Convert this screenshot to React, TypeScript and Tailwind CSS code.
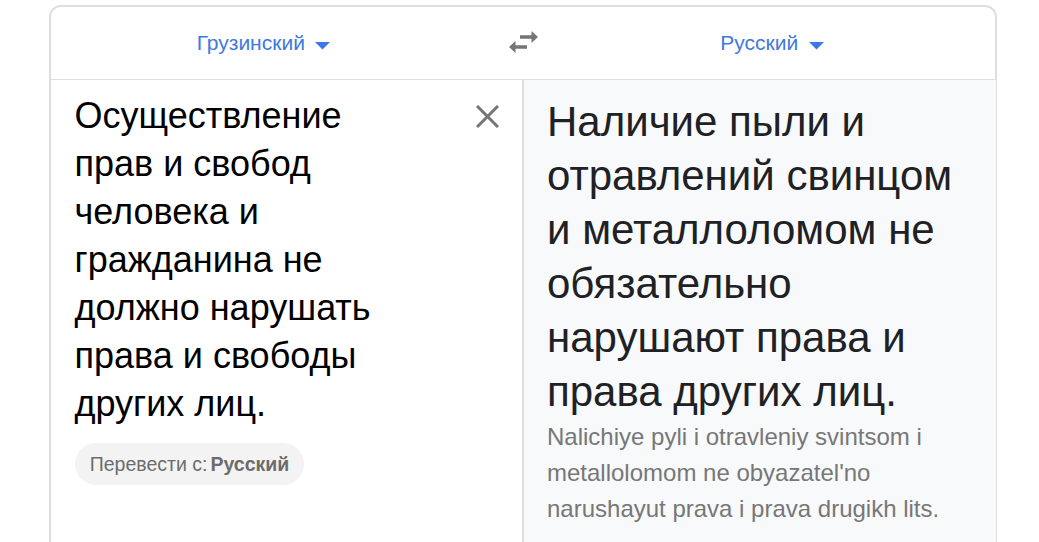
const source = [
  "Осуществление",
  "прав и свобод",
  "человека и",
  "гражданина не",
  "должно нарушать",
  "права и свободы",
  "других лиц.",
];

const translation = [
  "Наличие пыли и",
  "отравлений свинцом",
  "и металлоломом не",
  "обязательно",
  "нарушают права и",
  "права других лиц.",
];

const translit = [
  "Nalichiye pyli i otravleniy svintsom i",
  "metallolomom ne obyazatel'no",
  "narushayut prava i prava drugikh lits.",
];

const Lines = ({ lines }: { lines: string[] }) => (
  <>
    {lines.map((line) => (
      <span key={line} className="block whitespace-nowrap">
        {line}
      </span>
    ))}
  </>
);

const LangButton = ({ label }: { label: string }) => (
  <button className="flex items-center gap-[10.500px] text-[21px] leading-6 text-[#3e7ae0]">
    {label}
    <svg width="15" height="8" viewBox="0 0 15 8" className="mt-[5px]" fill="#3b78e7">
      <path d="M0 0h15L7.500 7.500z" />
    </svg>
  </button>
);

const App = () => {
  return (
    <div className="h-[542px] overflow-hidden bg-white pl-[49px] pt-[5px] font-['Liberation_Sans',Arial,sans-serif]">
      <div className="flex h-[560px] w-[948px] flex-col">
        {/* Language bar */}
        <div className="flex h-[75px] shrink-0 rounded-t-[12px] border-2 border-b-[1px] border-[#dfdfdf]">
          <div className="flex w-[425px] items-center justify-center">
            <LangButton label="Грузинский" />
          </div>
          <div className="flex w-[94px] items-center justify-center">
            <svg width="30" height="22" viewBox="0 0 30 22" className="mb-[2px]" fill="#757575">
              <path d="M23.500 0l6.500 6-6.500 6V7.800H12V4.200h11.500zM7.500 10v4.200H19v3.600H7.500V22L1 16z" />
            </svg>
          </div>
          <div className="flex w-[425px] items-center justify-center pr-[21px]">
            <LangButton label="Русский" />
          </div>
        </div>

        <div className="flex flex-1 border-l-2 border-r border-[#dfdfdf]">
          {/* Source text */}
          <div className="flex w-[473px] justify-between border-r-2 border-[#dfdfdf] pl-[23.500px] pr-[23px] pt-3">
            <div>
              <p className="text-[36px] leading-[48px] text-black">
                <Lines lines={source} />
              </p>
              <button className="ml-[0.5px] mt-[15px] flex h-[42px] w-[229px] items-center justify-center gap-[3px] whitespace-nowrap rounded-full bg-[#f3f3f3] pt-px text-[19.500px] text-[#6c6c6c]">
                Перевести с: <b>Русский</b>
              </button>
            </div>
            <svg width="23" height="23" viewBox="0 0 23 23" className="mt-[13px]" stroke="#757575" strokeWidth="3">
              <path d="M1 1l21 21M22 1L1 22" />
            </svg>
          </div>

          {/* Translated text */}
          <div className="flex-1 bg-[#f8f9fb] pl-[23px] pt-[15px]">
            <p className="text-[42px] leading-[54px] text-[#202124]">
              <Lines lines={translation} />
            </p>
            <p className="text-[24px] leading-9 text-[#777]">
              <Lines lines={translit} />
            </p>
          </div>
        </div>
      </div>
    </div>
  );
};

export default App;
